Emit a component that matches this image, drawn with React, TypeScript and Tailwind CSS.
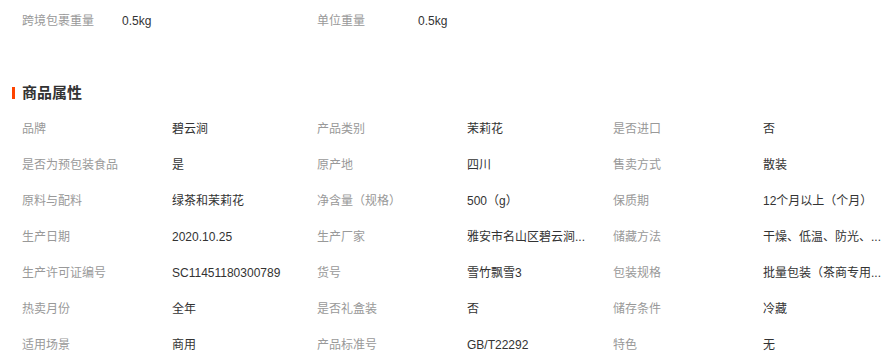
const baseRows: [string, string, string, string][] = [
	["跨境包裹重量", "0.5kg", "单位重量", "0.5kg"],
];

// 超长的值按页面原样截断显示
const attrs: [string, string][] = [
	["品牌", "碧云涧"],
	["产品类别", "茉莉花"],
	["是否进口", "否"],
	["是否为预包装食品", "是"],
	["原产地", "四川"],
	["售卖方式", "散装"],
	["原料与配料", "绿茶和茉莉花"],
	["净含量（规格）", "500（g）"],
	["保质期", "12个月以上（个月）"],
	["生产日期", "2020.10.25"],
	["生产厂家", "雅安市名山区碧云涧..."],
	["储藏方法", "干燥、低温、防光、..."],
	["生产许可证编号", "SC11451180300789"],
	["货号", "雪竹飘雪3"],
	["包装规格", "批量包装（茶商专用..."],
	["热卖月份", "全年"],
	["是否礼盒装", "否"],
	["储存条件", "冷藏"],
	["适用场景", "商用"],
	["产品标准号", "GB/T22292"],
	["特色", "无"],
];

const App = () => {
	return (
		<div className="w-[895px] h-[362px] overflow-hidden bg-white pt-[1px] font-['Liberation_Sans','Noto_Sans_CJK_SC',sans-serif] text-[12px] text-[#333]">
			{/* 基础信息 */}
			{baseRows.map((row, i) => (
				<div
					key={i}
					className="grid grid-cols-[100px_195px_101px_1fr] items-center h-[40px] pl-[22px]"
				>
					<span className="text-[#999]">{row[0]}</span>
					<span>{row[1]}</span>
					<span className="text-[#999]">{row[2]}</span>
					<span>{row[3]}</span>
				</div>
			))}

			{/* 商品属性 */}
			<div className="mt-[40px] h-[24px] flex items-center pl-[12px]">
				<span className="w-[3px] h-[12px] bg-[#ff4400] mr-[7px]" />
				<h3 className="text-[15px] font-bold text-[#333]">商品属性</h3>
			</div>

			<div className="mt-[6px] grid grid-cols-[150px_145px_150px_146px_150px_1fr] pl-[22px]">
				{attrs.map(([label, value]) => (
					<div key={label} className="contents">
						<div className="h-[36px] flex items-center text-[#999] whitespace-nowrap">
							{label}
						</div>
						<div className="h-[36px] flex items-center whitespace-nowrap">
							{value}
						</div>
					</div>
				))}
			</div>
		</div>
	);
};

export default App;
